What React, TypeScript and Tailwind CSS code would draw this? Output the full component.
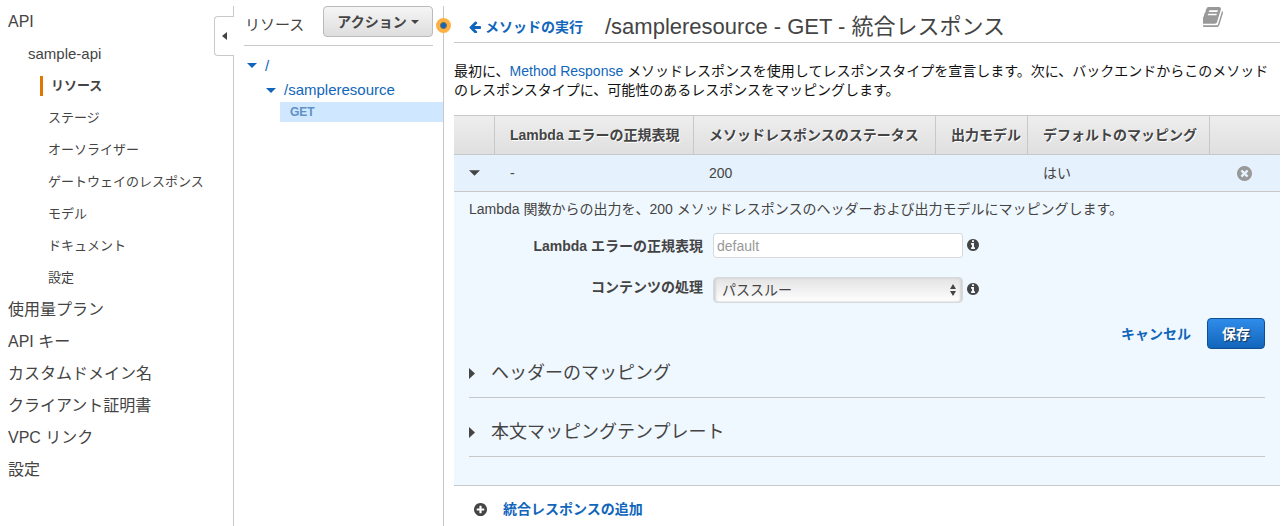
import type { ReactNode } from "react";

const CIRCLE =
  "M1664 896q0 209-103 385.500t-279.500 279.500-385.500 103-385.500-103-279.500-279.500-103-385.500 103-385.500 279.500-279.500 385.500-103 385.500 103 279.500 279.500 103 385.500z";

const ICONS = {
  arrowLeft:
    "M1664 896v128q0 53-32.500 90.500t-84.500 37.500h-704l293 294q38 36 38 90t-38 90l-75 76q-37 37-90 37-52 0-91-37l-651-652q-37-37-37-90 0-52 37-91l651-650q38-38 91-38 52 0 90 38l75 74q38 38 38 91t-38 91l-293 293h704q52 0 84.500 37.500t32.500 90.500z",
  book: "M1639 478q40 57 18 129l-275 906q-19 64-76.500 107.500t-122.500 43.500h-923q-77 0-148.500-53.500t-99.500-131.500q-24-67-2-127 0-4 3-27t4-37q1-8-3-21.500t-3-19.500q2-11 8-21t16.500-23.500 16.500-23.500q23-38 45-91.500t30-91.500q3-10 .5-30t-.5-28q3-11 17-28t17-23q21-36 42-92t25-90q1-9-2.500-32t.5-28q4-13 22-30.500t22-22.500q19-26 42.500-84.500t27.500-96.500q1-8-3-25.500t-2-26.500q2-8 9-18t18-23 17-21q8-12 16.500-30.500t15-35 16-36 19.500-32 26.500-23.500 36-11.500 47.500 5.500l-1 3q38-9 51-9h761q74 0 114 56t18 130l-274 906q-36 119-71.500 153.500t-128.500 34.500h-869q-27 0-38 15-11 16-1 43 24 70 144 70h923q29 0 56-15.500t35-41.500l300-987q7-22 5-57 38 15 59 43zm-1064 2q-4 13 2 22.500t20 9.500h608q13 0 25.500-9.500t16.500-22.500l21-64q4-13-2-22.500t-20-9.500h-608q-13 0-25.500 9.500t-16.500 22.500zm-83 256q-4 13 2 22.500t20 9.500h608q13 0 25.500-9.500t16.500-22.500l21-64q4-13-2-22.500t-20-9.500h-608q-13 0-25.500 9.500t-16.500 22.500z",
  info:
    "M1152 1376v-160q0-14-9-23t-23-9h-96v-512q0-14-9-23t-23-9h-320q-14 0-23 9t-9 23v160q0 14 9 23t23 9h96v320h-96q-14 0-23 9t-9 23v160q0 14 9 23t23 9h448q14 0 23-9t9-23zM1024 480v-160q0-14-9-23t-23-9h-192q-14 0-23 9t-9 23v160q0 14 9 23t23 9h192q14 0 23-9t9-23z" +
    CIRCLE,
  plus:
    "M1344 960v-128q0-26-19-45t-45-19h-256v-256q0-26-19-45t-45-19h-128q-26 0-45 19t-19 45v256h-256q-26 0-45 19t-19 45v128q0 26 19 45t45 19h256v256q0 26 19 45t45 19h128q26 0 45-19t19-45v-256h256q26 0 45-19t19-45z" +
    CIRCLE,
  times:
    "M1277 1122q0-26-19-45l-181-181 181-181q19-19 19-45 0-27-19-46l-90-90q-19-19-46-19-26 0-45 19l-181 181-181-181q-19-19-45-19-27 0-46 19l-90 90q-19 19-19 46 0 26 19 45l181 181-181 181q-19 19-19 45 0 27 19 46l90 90q19 19 46 19 26 0 45-19l181-181 181 181q19 19 45 19 27 0 46-19l90-90q19-19 19-46z" +
    CIRCLE,
};

function Icon({ name, className }: { name: keyof typeof ICONS; className: string }) {
  return (
    <svg viewBox="128 128 1536 1536" className={className} fill="currentColor" fillRule="evenodd" aria-hidden="true">
      <path d={ICONS[name]} />
    </svg>
  );
}

function CaretDown({ className }: { className: string }) {
  return (
    <svg viewBox="0 0 10 5" className={className} fill="currentColor" aria-hidden="true">
      <path d="M0 0h10L5 5z" />
    </svg>
  );
}

function CaretRight({ className }: { className: string }) {
  return (
    <svg viewBox="0 0 6 12" preserveAspectRatio="none" className={className} fill="currentColor" aria-hidden="true">
      <path d="M0 0l6 6-6 6z" />
    </svg>
  );
}

const API_ITEMS = ["ステージ", "オーソライザー", "ゲートウェイのレスポンス", "モデル", "ドキュメント", "設定"];
const ROOT_ITEMS = ["使用量プラン", "API キー", "カスタムドメイン名", "クライアント証明書", "VPC リンク", "設定"];

function Sidebar() {
  return (
    <nav className="relative w-[234px] shrink-0 border-r border-[#c8c8c8]">
      <ul>
        <li>
          <a href="#api" className="flex h-8 items-center pl-2 text-base">API</a>
          <ul>
            <li>
              <a href="#sample-api" className="flex h-8 items-center pl-7 text-[15px]">sample-api</a>
              <ul className="text-[13px]">
                <li className="flex h-8 items-center pl-10">
                  <a href="#resources" className="border-l-3 border-[#e07700] pl-2 leading-5 font-bold">リソース</a>
                </li>
                {API_ITEMS.map((item) => (
                  <li key={item}>
                    <a href="#item" className="flex h-8 items-center pl-12 leading-5">{item}</a>
                  </li>
                ))}
              </ul>
            </li>
          </ul>
        </li>
        {ROOT_ITEMS.map((item) => (
          <li key={item}>
            <a href="#root-item" className="flex h-8 items-center pl-2 text-base">{item}</a>
          </li>
        ))}
      </ul>
      <button
        type="button"
        aria-label="collapse"
        className="absolute top-[10px] -right-px flex h-10 w-5 items-center justify-center rounded-l border border-r-0 border-[#c8c8c8] bg-white"
      >
        <CaretRight className="h-2 w-[5px] rotate-180" />
      </button>
    </nav>
  );
}

function ResourceTree() {
  return (
    <section className="relative w-[210px] shrink-0 border-r border-[#c8c8c8] pl-[10px]">
      <div className="mr-[10px] flex h-10 items-start justify-between border-b border-[#c8c8c8]">
        <h2 className="pl-px text-[15px] leading-[38px]">リソース</h2>
        <button
          type="button"
          className="flex h-[31px] w-[110px] items-center justify-center gap-1 rounded border border-[#bbb] bg-linear-to-b from-[#f5f5f5] to-[#dedede] text-sm font-bold"
        >
          アクション
          <CaretDown className="h-1 w-2" />
        </button>
      </div>
      <ul className="pt-[7px] text-[15px] text-[#1166bb]">
        <li>
          <a href="#root" className="flex h-[25px] items-center gap-2 pl-[3px]">
            <CaretDown className="h-[5px] w-[10px]" />/
          </a>
          <ul>
            <li>
              <a href="#sampleresource" className="flex h-6 items-center gap-2 pl-[22px]">
                <CaretDown className="h-[5px] w-[10px]" />
                /sampleresource
              </a>
              <a href="#get" className="ml-9 flex h-5 items-center bg-[#cfe7ff] pl-[10px] text-xs font-bold text-[#6090c4]">
                GET
              </a>
            </li>
          </ul>
        </li>
      </ul>
      <span className="absolute top-3 -right-2 flex size-[15px] items-center justify-center rounded-full bg-[#fdb044]">
        <span className="size-[7px] rounded-full border border-[#6e6a5c] bg-[#1166bb]" />
      </span>
    </section>
  );
}

function HeadCell({ children }: { children?: ReactNode }) {
  return (
    <th className="border-y border-r border-[#c8c8c8] pl-[15px] text-left font-bold whitespace-nowrap text-shadow-[1px_1px_0_#fff] last:border-r-0">
      {children}
    </th>
  );
}

function Section({ title }: { title: string }) {
  return (
    <button
      type="button"
      className="flex w-full items-center gap-4 border-b border-[#c8c8c8] pb-[10px] text-left text-lg leading-7"
    >
      <CaretRight className="h-[11px] w-[6px]" />
      {title}
    </button>
  );
}

function ResponseForm() {
  return (
    <form className="px-[15px] pt-[7px] pb-7" onSubmit={(e) => e.preventDefault()}>
      <p className="leading-5">Lambda 関数からの出力を、200 メソッドレスポンスのヘッダーおよび出力モデルにマッピングします。</p>
      <div className="mt-[14px] grid grid-cols-[234px_250px_auto] items-start justify-start gap-x-[10px] gap-y-[18px]">
        <label htmlFor="pattern" className="text-right leading-[26px] font-bold">Lambda エラーの正規表現</label>
        <input
          id="pattern"
          type="text"
          placeholder="default"
          className="h-[25px] w-full rounded-[3px] border border-[#d6dade] bg-white px-[3px] placeholder:text-[#999]"
        />
        <Icon name="info" className="mt-[6px] -ml-[6px] size-3" />
        <label htmlFor="content" className="text-right leading-5 font-bold">コンテンツの処理</label>
        <div className="relative">
          <select
            id="content"
            className="block h-[26px] w-full appearance-none rounded border border-[#d6dade] bg-linear-to-b from-[#e3e3e3] to-white px-2 leading-[22px] shadow-[inset_2px_0_2px_#d4d4d4,inset_-2px_0_2px_#d4d4d4]"
          >
            <option>パススルー</option>
          </select>
          <svg viewBox="0 0 6 12" className="pointer-events-none absolute top-[7px] right-[7px] h-3 w-[6px]" fill="currentColor" aria-hidden="true">
            <path d="M0 5l3-5 3 5zM0 7h6l-3 5z" />
          </svg>
        </div>
        <Icon name="info" className="mt-[6px] -ml-[6px] size-3" />
      </div>
      <div className="mt-[15px] flex items-center justify-end gap-4">
        <button type="button" className="font-bold text-[#1166bb]">キャンセル</button>
        <button
          type="submit"
          className="h-[31px] w-[58px] rounded border border-[#114f94] bg-linear-to-b from-[#2f8cea] to-[#1166bb] font-bold text-white text-shadow-[1px_1px_1px_#113355]"
        >
          保存
        </button>
      </div>
      <div className="mt-[10px] flex flex-col gap-5">
        <Section title="ヘッダーのマッピング" />
        <Section title="本文マッピングテンプレート" />
      </div>
    </form>
  );
}

export default function App() {
  return (
    <div
      lang="ja"
      className="flex min-h-screen bg-white pt-[6px] font-['Liberation_Sans','Noto_Sans_CJK_JP',sans-serif] text-sm text-[#444]"
    >
      <Sidebar />
      <ResourceTree />
      <main className="min-w-0 flex-1 pr-[6px] pl-[10px]">
        <header className="flex h-[37px] items-center border-b border-[#c8c8c8]">
          <a href="#method" className="flex items-center gap-1 pt-[6px] pl-[15px] font-bold text-[#1166bb]">
            <Icon name="arrowLeft" className="size-3" />
            メソッドの実行
          </a>
          <h1 className="pt-[6px] pl-[22px] text-[22px] leading-8">/sampleresource - GET - 統合レスポンス</h1>
          <a href="#docs" aria-label="docs" className="mr-[57px] mb-[14px] ml-auto text-[#999]">
            <Icon name="book" className="size-5" />
          </a>
        </header>
        <p className="pt-[19px] pr-2 leading-[19px] text-[#111]">
          最初に、<a href="#method-response" className="text-[#1166bb]">Method Response</a>{" "}
          メソッドレスポンスを使用してレスポンスタイプを宣言します。次に、バックエンドからこのメソッドのレスポンスタイプに、可能性のあるレスポンスをマッピングします。
        </p>
        <table className="mt-[15px] w-full table-fixed border-separate border-spacing-0">
          <colgroup>
            <col className="w-[41px]" />
            <col className="w-[199px]" />
            <col className="w-[242px]" />
            <col className="w-[92px]" />
            <col className="w-[182px]" />
            <col />
          </colgroup>
          <thead>
            <tr className="h-10 bg-linear-to-b from-[#eee] to-[#dfdfdf]">
              <HeadCell />
              <HeadCell>Lambda エラーの正規表現</HeadCell>
              <HeadCell>メソッドレスポンスのステータス</HeadCell>
              <HeadCell>出力モデル</HeadCell>
              <HeadCell>デフォルトのマッピング</HeadCell>
              <HeadCell />
            </tr>
          </thead>
          <tbody>
            <tr className="h-[37px] bg-[#e5f1fd] *:border-b *:border-[#c8c8c8] *:pl-[15px]">
              <td>
                <button type="button" aria-label="toggle" className="block">
                  <CaretDown className="h-[6px] w-[11px]" />
                </button>
              </td>
              <td>-</td>
              <td>200</td>
              <td />
              <td>はい</td>
              <td>
                <button type="button" aria-label="delete" className="ml-3 block text-[#999]">
                  <Icon name="times" className="size-[15px]" />
                </button>
              </td>
            </tr>
            <tr>
              <td colSpan={6} className="border-b border-[#c8c8c8] bg-[#f0f8ff]">
                <ResponseForm />
              </td>
            </tr>
          </tbody>
        </table>
        <button type="button" className="mt-[13px] flex items-center gap-4 pl-5 font-bold text-[#1166bb]">
          <Icon name="plus" className="size-[13px] text-[#444]" />
          統合レスポンスの追加
        </button>
      </main>
    </div>
  );
}
